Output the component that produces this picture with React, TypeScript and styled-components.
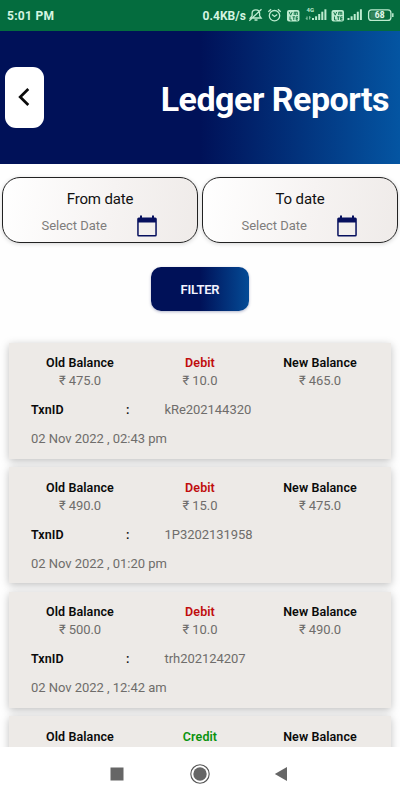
import React from "react";
import styled, { createGlobalStyle } from "styled-components";

const GlobalStyle = createGlobalStyle`
  *, *::before, *::after { box-sizing: border-box; }
  body { margin: 0; background: #fff; font-family: Roboto, "Noto Sans", sans-serif; }
`;

const Screen = styled.div`
  width: 400px;
  height: 800px;
  display: flex;
  flex-direction: column;
  overflow: hidden;
  background: #fefefe;
`;

const StatusBar = styled.header`
  flex: none;
  height: 31px;
  padding-left: 7px;
  display: flex;
  justify-content: space-between;
  align-items: center;
  background: #046c3e;
  color: #d5f5e1;
  font-size: 12px;
  font-weight: 700;
  line-height: 31px;
  white-space: nowrap;
`;

const Clock = styled.span`
  letter-spacing: 0.3px;
  padding-top: 1px;
`;

const StatusRight = styled.div`
  display: flex;
  align-items: center;
`;

const Speed = styled.span`
  letter-spacing: 0.05px;
  padding-top: 1px;
`;

const StatusIcons = styled.svg`
  display: block;
  width: 154px;
  height: 31px;
`;

const TitleBar = styled.div`
  flex: none;
  height: 133px;
  padding: 0 11px 1px 5px;
  display: flex;
  align-items: center;
  justify-content: space-between;
  background: linear-gradient(90deg, #001158 0%, #001158 50%, #0455a2 100%);
`;

const BackButton = styled.button`
  width: 39px;
  height: 61px;
  padding: 0 1px 0 0;
  border: 0;
  border-radius: 11px;
  background: #fff;
  display: flex;
  align-items: center;
  justify-content: center;
`;

const Title = styled.h1`
  margin: 0;
  padding-top: 4px;
  color: #fff;
  font-size: 34px;
  line-height: 40px;
  font-weight: 700;
  letter-spacing: -0.5px;
  white-space: nowrap;
`;

const DateRow = styled.div`
  flex: none;
  display: flex;
  gap: 4px;
  padding: 13px 2px 0;
`;

const DateBox = styled.div`
  flex: 1;
  height: 66px;
  padding-top: 12px;
  border: 1px solid #222;
  border-radius: 18px;
  background: linear-gradient(100deg, #fff 0%, #f6f3f2 55%, #efebe9 100%);
  box-shadow: 0 1px 4px rgba(0, 0, 0, 0.16);
`;

const DateLabel = styled.div`
  height: 19px;
  text-align: center;
  font-size: 15px;
  line-height: 19px;
  color: #111;
  letter-spacing: -0.15px;
`;

const DatePick = styled.div`
  display: flex;
  align-items: center;
  justify-content: space-between;
  height: 32px;
  padding: 1px 40px 0 38.5px;
  font-size: 13px;
  letter-spacing: -0.03px;
  color: #7f7d7c;
`;

const FilterButton = styled.button`
  flex: none;
  align-self: center;
  width: 98px;
  height: 44px;
  margin-top: 24px;
  padding: 1px 0 0;
  border: 0;
  border-radius: 10px;
  background: linear-gradient(90deg, #001158 0%, #001158 50%, #044b96 100%);
  box-shadow: 0 1px 3px rgba(0, 17, 88, 0.3);
  color: #f4f4ff;
  font-family: inherit;
  font-size: 13px;
  font-weight: 600;
  letter-spacing: -0.2px;
`;

const List = styled.main`
  flex: 1;
  min-height: 0;
  margin-top: 20px;
  padding: 11.5px 9px 0;
  display: flex;
  flex-direction: column;
  gap: 8.5px;
  overflow: hidden;
`;

const Card = styled.article`
  flex: none;
  height: 116px;
  padding: 10.5px 11px 0;
  background: #edeae7;
  box-shadow: 0 2px 8px rgba(0, 0, 0, 0.25);
  font-size: 13px;
  color: #6f6d6b;
`;

const Amounts = styled.div`
  display: grid;
  grid-template-columns: repeat(3, 1fr);
  text-align: center;
`;

const AmountLabel = styled.div<{ $color?: string }>`
  height: 19px;
  line-height: 19px;
  font-size: 12.5px;
  font-weight: 600;
  letter-spacing: 0.09px;
  color: ${(p) => p.$color ?? "#0a0a0a"};
`;

const Amount = styled.div`
  height: 17px;
  line-height: 17px;
  letter-spacing: -0.08px;
`;

const TxnRow = styled.div`
  display: grid;
  grid-template-columns: 95px 38.5px 1fr;
  margin-top: 11px;
  padding-left: 11px;
  height: 19px;
  line-height: 19px;
  letter-spacing: -0.05px;
`;

const TxnKey = styled.span`
  font-size: 12.5px;
  font-weight: 600;
  letter-spacing: 0.1px;
  color: #0a0a0a;
`;

const Stamp = styled.div`
  margin-top: 10px;
  padding-left: 11px;
  line-height: 19px;
  letter-spacing: -0.03px;
`;

const NavBar = styled.footer`
  flex: none;
  height: 53px;
  background: #fff;
  display: flex;
  align-items: center;
  justify-content: center;
  gap: 63px;
`;

const NavIcon = styled.svg`
  display: block;
  width: 20px;
  height: 20px;
`;

function VolteBadge({ x }: { x: number }) {
  return (
    <g transform={`translate(${x} 10)`}>
      <rect width="12.5" height="11.5" rx="2" fill="#bdebcf" />
      <path
        d="M2.2 2l1.5 3.2L5.2 2M7.2 5V2.2h1.500V5M8.700 2.200h1.600V5M3 6.500V10h2M5.500 6.800h2.600M6.800 6.800V10M11 6.800H9.200V10H11M9.200 8.400H11"
        fill="none"
        stroke="#046c3e"
        strokeWidth=".9"
      />
    </g>
  );
}

function SignalBars({ x }: { x: number }) {
  return (
    <g fill="#bdebcf" transform={`translate(${x} 9)`}>
      <rect x="0" y="9" width="2" height="2" />
      <rect x="3.1" y="7.3" width="2" height="3.7" />
      <rect x="6.2" y="5" width="2" height="6" />
      <rect x="9.3" y="2.7" width="2" height="8.3" />
      <rect x="12.4" y="0.3" width="2" height="10.7" />
    </g>
  );
}

function SystemIcons() {
  return (
    <StatusIcons viewBox="246 0 154 31">
      <g fill="none" stroke="#bdebcf" strokeWidth="1.3">
        <path d="M250.300 18h10.900l-1.600-2.200v-2.600c0-2.200-1.500-3.400-3.700-3.400s-3.800 1.200-3.800 3.400v2.600z M254.500 20h3M249.300 20.700l12.200-11.400" />
        <circle cx="274.500" cy="15.700" r="5.200" />
        <path d="M268.300 11.700l2.800-2.400M280.700 11.700l-2.800-2.400M272 14.500l2.500 2 2.700-2" />
        <rect x="368.600" y="9.800" width="22.300" height="10.600" rx="3" />
      </g>
      <VolteBadge x={287} />
      <text x="306.500" y="12.300" fontSize="6" fontWeight="700" fill="#bdebcf">4G</text>
      <path d="M307 16.500v3M306 18.300l1 1.200M309.700 19.500v-3M309.700 16.500l1 1" stroke="#bdebcf" strokeWidth=".8" fill="none" />
      <SignalBars x={312} />
      <VolteBadge x={331.5} />
      <SignalBars x={347.5} />
      <rect x="370.300" y="11.500" width="13.500" height="7.200" rx="1" fill="#34845b" />
      <text x="379.700" y="18.200" textAnchor="middle" fontSize="8.500" fontWeight="700" fill="#e3fbee">68</text>
      <path d="M392.800 13.200v3.800" stroke="#bdebcf" strokeWidth="1.500" />
    </StatusIcons>
  );
}

function CalendarIcon() {
  return (
    <svg width="20" height="22" viewBox="0 0 20 22">
      <path
        fill="#07105e"
        fillRule="evenodd"
        d="M3 .5h2v2h10v-2h2v2h1.2a1.6 1.6 0 0 1 1.6 1.6v15.8a1.6 1.6 0 0 1-1.6 1.6H1.8A1.6 1.6 0 0 1 .2 19.900V4.100a1.600 1.600 0 0 1 1.600-1.600H3zM1.700 7.500v12.400h16.600V7.500z"
      />
    </svg>
  );
}

function DateField({ label }: { label: string }) {
  return (
    <DateBox>
      <DateLabel>{label}</DateLabel>
      <DatePick>
        <span>Select Date</span>
        <CalendarIcon />
      </DatePick>
    </DateBox>
  );
}

type Entry = {
  kind: "Debit" | "Credit";
  before: string;
  amount: string;
  after: string;
  txn: string;
  stamp: string;
};

const entries: Entry[] = [
  { kind: "Debit", before: "₹ 475.0", amount: "₹ 10.0", after: "₹ 465.0", txn: "kRe202144320", stamp: "02 Nov 2022 , 02:43 pm" },
  { kind: "Debit", before: "₹ 490.0", amount: "₹ 15.0", after: "₹ 475.0", txn: "1P3202131958", stamp: "02 Nov 2022 , 01:20 pm" },
  { kind: "Debit", before: "₹ 500.0", amount: "₹ 10.0", after: "₹ 490.0", txn: "trh202124207", stamp: "02 Nov 2022 , 12:42 am" },
  { kind: "Credit", before: "", amount: "", after: "", txn: "", stamp: "" },
];

function LedgerCard({ entry }: { entry: Entry }) {
  return (
    <Card>
      <Amounts>
        <AmountLabel>Old Balance</AmountLabel>
        <AmountLabel $color={entry.kind === "Debit" ? "#c00d0d" : "#0a930d"}>{entry.kind}</AmountLabel>
        <AmountLabel>New Balance</AmountLabel>
        <Amount>{entry.before}</Amount>
        <Amount>{entry.amount}</Amount>
        <Amount>{entry.after}</Amount>
      </Amounts>
      {entry.txn && (
        <>
          <TxnRow>
            <TxnKey>TxnID</TxnKey>
            <TxnKey>:</TxnKey>
            <span>{entry.txn}</span>
          </TxnRow>
          <Stamp>{entry.stamp}</Stamp>
        </>
      )}
    </Card>
  );
}

export default function App() {
  return (
    <>
      <GlobalStyle />
      <Screen>
        <StatusBar>
          <Clock>5:01 PM</Clock>
          <StatusRight>
            <Speed>0.4KB/s</Speed>
            <SystemIcons />
          </StatusRight>
        </StatusBar>
        <TitleBar>
          <BackButton aria-label="Back">
            <svg width="12" height="18" viewBox="0 0 12 18">
              <path d="M10.300 1L2.200 9l8.100 8" fill="none" stroke="#0a0a0a" strokeWidth="2.700" />
            </svg>
          </BackButton>
          <Title>Ledger Reports</Title>
        </TitleBar>
        <DateRow>
          <DateField label="From date" />
          <DateField label="To date" />
        </DateRow>
        <FilterButton>FILTER</FilterButton>
        <List>
          {entries.map((entry, i) => (
            <LedgerCard key={i} entry={entry} />
          ))}
        </List>
        <NavBar>
          <NavIcon viewBox="0 0 20 20">
            <rect x="3.500" y="3.500" width="13" height="13" fill="#666" />
          </NavIcon>
          <NavIcon viewBox="0 0 20 20">
            <circle cx="10" cy="10" r="9.200" fill="none" stroke="#555" strokeWidth="1.100" />
            <circle cx="10" cy="10" r="6.700" fill="#666" />
          </NavIcon>
          <NavIcon viewBox="0 0 20 20">
            <path d="M1.800 10L14 3v14z" fill="#666" />
          </NavIcon>
        </NavBar>
      </Screen>
    </>
  );
}
